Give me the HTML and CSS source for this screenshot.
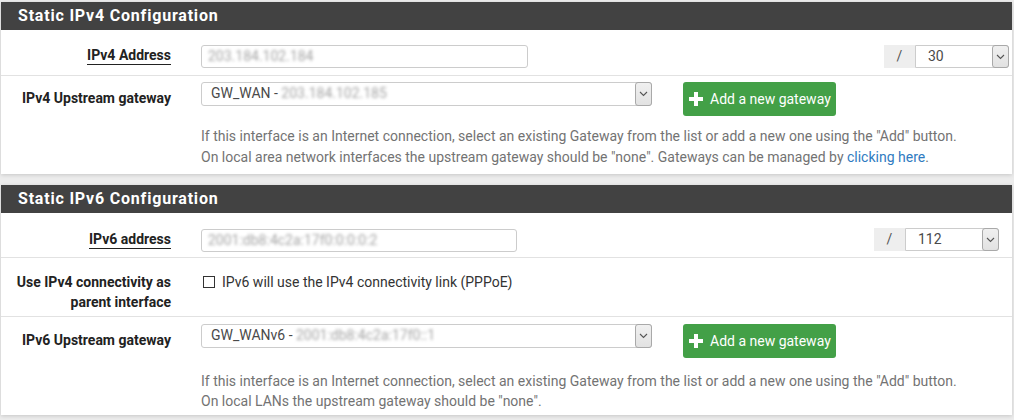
FILE: index.html
```html
<!DOCTYPE html>
<html lang="en">
<head>
<meta charset="utf-8">
<title>Static IP Configuration</title>
<link rel="stylesheet" href="styles.css">
</head>
<body>
<div class="page">
  <section class="panel">
    <h2 class="panel-heading">Static IPv4 Configuration</h2>
    <div class="row row-addr">
      <div class="label"><span class="req">IPv4 Address</span></div>
      <div class="content">
        <div class="input w4"><span class="blur">203.184.102.184</span></div>
        <div class="subnet sub4">
          <span class="addon">/</span>
          <div class="select sel-sub"><span class="sel-text">30</span><span class="arrow"><svg width="9" height="6" viewBox="0 0 9 6"><polyline points="1,1 4.5,4.5 8,1" fill="none" stroke="#555" stroke-width="1.1"/></svg></span></div>
        </div>
      </div>
    </div>
    <div class="row row-gw gw4">
      <div class="label label-gw">IPv4 Upstream gateway</div>
      <div class="content col">
        <div class="controls">
          <div class="select sel-gw"><span class="sel-text">GW_WAN - <span class="blur">203.184.102.185</span></span><span class="arrow"><svg width="9" height="6" viewBox="0 0 9 6"><polyline points="1,1 4.5,4.5 8,1" fill="none" stroke="#555" stroke-width="1.1"/></svg></span></div>
          <button class="btn"><svg class="plus" width="14" height="14" viewBox="0 0 14 14"><path d="M5 0h4v5h5v4H9v5H5V9H0V5h5z" fill="#fff"/></svg>Add a new gateway</button>
        </div>
        <p class="help">If this interface is an Internet connection, select an existing Gateway from the list or add a new one using the "Add" button.<br>On local area network interfaces the upstream gateway should be "none". Gateways can be managed by <a href="#">clicking here</a>.</p>
      </div>
    </div>
  </section>

  <section class="panel">
    <h2 class="panel-heading">Static IPv6 Configuration</h2>
    <div class="row row-addr6">
      <div class="label"><span class="req">IPv6 address</span></div>
      <div class="content">
        <div class="input w6"><span class="blur">2001:db8:4c2a:17f0:0:0:0:2</span></div>
        <div class="subnet sub6">
          <span class="addon">/</span>
          <div class="select sel-sub"><span class="sel-text">112</span><span class="arrow"><svg width="9" height="6" viewBox="0 0 9 6"><polyline points="1,1 4.5,4.5 8,1" fill="none" stroke="#555" stroke-width="1.1"/></svg></span></div>
        </div>
      </div>
    </div>
    <div class="row row-check">
      <div class="label label-two">Use IPv4 connectivity as<br>parent interface</div>
      <div class="content">
        <label class="check"><span class="box"></span>IPv6 will use the IPv4 connectivity link (PPPoE)</label>
      </div>
    </div>
    <div class="row row-gw gw6">
      <div class="label label-gw">IPv6 Upstream gateway</div>
      <div class="content col">
        <div class="controls">
          <div class="select sel-gw"><span class="sel-text">GW_WANv6 - <span class="blur">2001:db8:4c2a:17f0::1</span></span><span class="arrow"><svg width="9" height="6" viewBox="0 0 9 6"><polyline points="1,1 4.5,4.5 8,1" fill="none" stroke="#555" stroke-width="1.1"/></svg></span></div>
          <button class="btn"><svg class="plus" width="14" height="14" viewBox="0 0 14 14"><path d="M5 0h4v5h5v4H9v5H5V9H0V5h5z" fill="#fff"/></svg>Add a new gateway</button>
        </div>
        <p class="help">If this interface is an Internet connection, select an existing Gateway from the list or add a new one using the "Add" button.<br>On local LANs the upstream gateway should be "none".</p>
      </div>
    </div>
  </section>
</div>
</body>
</html>
```

FILE: styles.css
```css
* { box-sizing: border-box; }
html, body { margin: 0; padding: 0; }
body {
  background: #ececec;
  font-family: Roboto, "Liberation Sans", Arial, sans-serif;
  font-size: 14px;
  color: #333;
  height: 420px;
  overflow: hidden;
}
.page { padding: 2px 2px 0 1px; }
.panel {
  background: #fff;
  box-shadow: 0 1px 4px rgba(0,0,0,0.16);
  margin-bottom: 11px;
}
.panel-heading {
  margin: 0;
  height: 28px;
  line-height: 28px;
  padding-left: 17px;
  background: #424242;
  color: #fff;
  font-size: 16px;
  font-weight: 700;
  letter-spacing: 0.8px;
}
.row {
  display: grid;
  grid-template-columns: 200px 1fr;
  border-bottom: 1px solid #e2e2e2;
}
.row:last-child { border-bottom: none; }
.label {
  text-align: right;
  padding-right: 30px;
  font-weight: 700;
  font-size: 14px;
  line-height: 20px;
  color: #222;
}
.req { border-bottom: 1px solid #222; padding-bottom: 1px; }
.content { display: flex; align-items: flex-start; }
.content.col { flex-direction: column; }

.row-addr { padding: 15px 0 7px; }
.row-addr6 { padding: 16px 0 5px; }

.input {
  height: 23px;
  border: 1px solid #ccc;
  border-radius: 3px;
  padding-left: 6px;
  line-height: 21px;
  font-size: 14px;
}
.w4 { width: 327px; }
.w6 { width: 316px; }
.blur { color: #a5a5a5; filter: blur(1.4px); }

.subnet { display: flex; margin-left: auto; height: 23px; }
.sub4 { margin-right: 3px; }
.sub6 { margin-right: 13px; margin-top: -1px; }
.addon {
  width: 31px;
  background: #eee;
  text-align: center;
  line-height: 23px;
  font-size: 14px;
  color: #555;
}
.select {
  display: flex;
  align-items: stretch;
  border: 1px solid #ccc;
  border-radius: 3px;
  background: #fff;
  font-size: 14px;
  color: #4a4a4a;
}
.sel-text { flex: 1; padding-left: 9px; line-height: 21px; white-space: nowrap; overflow: hidden; }
.sel-sub { width: 94px; height: 23px; border-radius: 0 3px 3px 0; }
.sel-sub .sel-text { padding-left: 12px; }
.sel-gw { width: 451px; height: 24px; }
.arrow {
  width: 17px;
  margin: -1px -1px -1px 0;
  border: 1px solid #a9a9a9;
  border-radius: 3px;
  background: linear-gradient(#f0f0f0, #e2e2e2);
  display: flex;
  align-items: center;
  justify-content: center;
}

.row-gw.gw4 { padding: 6px 0 6px; }
.row-gw.gw6 { padding: 7px 0 4px; }
.label-gw { padding-top: 6px; }
.controls { display: flex; align-items: flex-start; gap: 31px; }
.btn {
  height: 34px;
  width: 153px;
  border: none;
  border-radius: 3px;
  background: #43a047;
  color: #fff;
  font-family: inherit;
  font-size: 14px;
  display: flex;
  align-items: center;
  padding: 0 0 0 6px;
  gap: 7px;
}
.plus { flex: none; }
.help {
  margin: 10px 0 0;
  line-height: 21px;
  color: #737373;
  font-size: 14px;
}
.gw6 .help { margin-top: 13px; line-height: 20px; }
.help a { color: #2f7bc1; text-decoration: none; }

.row-check { padding: 14px 0 4px; }
.check { display: flex; align-items: center; line-height: 20px; color: #333; padding-left: 2px; }
.box {
  width: 12px;
  height: 12px;
  border: 1px solid #333;
  margin-right: 7px;
  background: #fff;
}
```
